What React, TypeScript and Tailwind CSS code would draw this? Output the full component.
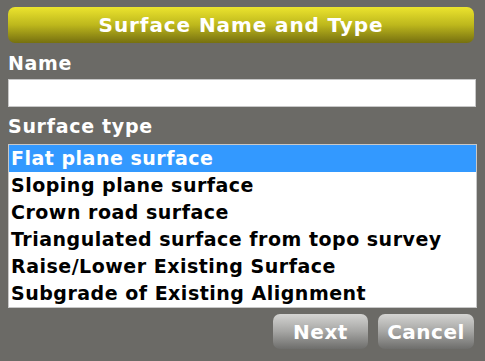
import { useState } from 'react'

const surfaceTypes = [
  'Flat plane surface',
  'Sloping plane surface',
  'Crown road surface',
  'Triangulated surface from topo survey',
  'Raise/Lower Existing Surface',
  'Subgrade of Existing Alignment',
]

export default function App() {
  const [selected, setSelected] = useState(0)

  return (
    <div className="w-[485px] h-[361px] bg-[#6b6a66] px-2 pt-[7px] font-['DejaVu_Sans',sans-serif] font-bold overflow-hidden">
      <div className="h-[36px] w-[466px] rounded-[7px] bg-gradient-to-b from-[#ece42e] via-[#bdb71c] to-[#767010] flex items-center justify-center">
        <span className="text-white text-[20px] tracking-[0.9px]">Surface Name and Type</span>
      </div>

      <div className="text-white text-[19px] tracking-[0.7px] leading-none mt-[11px]">Name</div>
      <input className="block mt-[6px] w-[468px] h-[28px] bg-white border border-[#c8c8c8] outline-none" />

      <div className="text-white text-[19px] tracking-[0.7px] leading-none mt-[10px]">Surface type</div>
      <ul className="mt-[8px] w-[469px] h-[164px] bg-white border border-[#c8c8c8] overflow-hidden">
        {surfaceTypes.map((item, i) => (
          <li
            key={item}
            onClick={() => setSelected(i)}
            className={
              i === selected
                ? 'h-[27px] pl-[2px] flex items-center bg-[#3399ff] text-white text-[19px] tracking-[0.5px] whitespace-nowrap'
                : 'h-[27px] pl-[2px] flex items-center text-black text-[19px] tracking-[0.5px] whitespace-nowrap'
            }
          >
            {item}
          </li>
        ))}
      </ul>

      <div className="flex justify-end gap-[10px] mt-[6px] pr-[3px]">
        <button className="w-[95px] h-[35px] rounded-[7px] bg-gradient-to-b from-[#d4d4d2] via-[#a6a6a4] to-[#6e6e6c] text-white text-[20px] tracking-[0.5px]">
          Next
        </button>
        <button className="w-[96px] h-[35px] rounded-[7px] bg-gradient-to-b from-[#d4d4d2] via-[#a6a6a4] to-[#6e6e6c] text-white text-[20px] tracking-[0.5px]">
          Cancel
        </button>
      </div>
    </div>
  )
}
